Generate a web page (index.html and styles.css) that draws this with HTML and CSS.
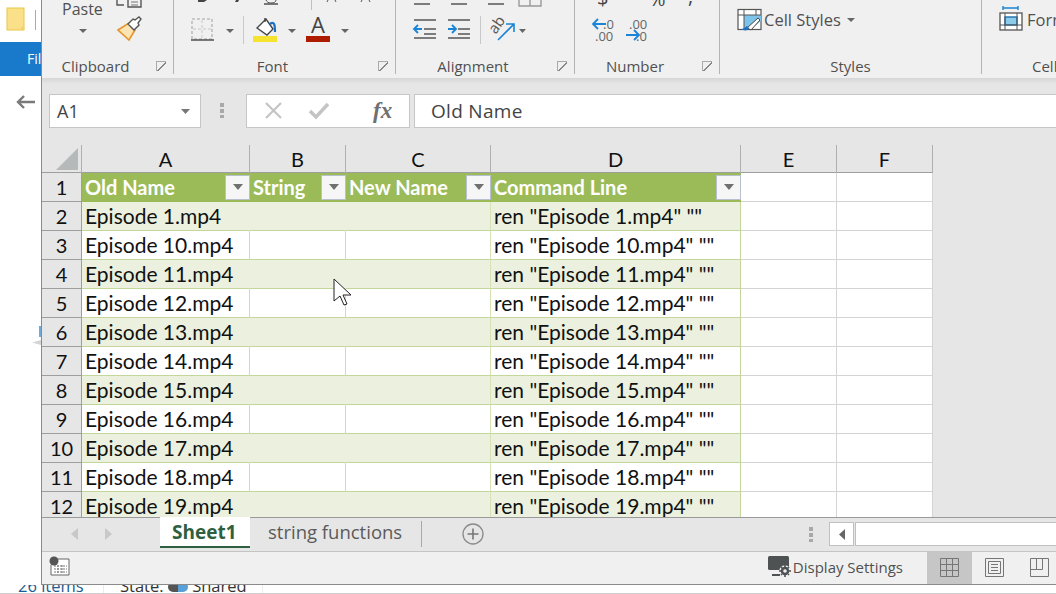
FILE: index.html
```html
<!DOCTYPE html>
<html lang="en">
<head>
    <meta charset="UTF-8">
    <title>Sheet1 - Excel</title>
    <link rel="stylesheet" href="styles.css">
</head>
<body>
    <div class="desktop">
        <div class="rail">
            <div class="rail-top">
                <svg class="folder" width="20" height="24" viewBox="0 0 20 24"><rect x="1" y="1" width="17" height="22" fill="#fbe08a" stroke="#e8c644"/><path d="M15 20h3v3h-3z" fill="#f6d25c"/></svg>
                <span class="rail-line"></span>
            </div>
            <div class="rail-file">File</div>
            <svg class="rail-back" width="20" height="16" viewBox="0 0 20 16"><path d="M9 2 3 8l6 6M3 8h17" fill="none" stroke="#7a7a7a" stroke-width="2.4"/></svg>
            <span class="rail-sliver"></span>
            <span class="rail-wedge"></span>
        </div>

        <div class="window">
            <div class="ribbon">
                <div class="group group-clipboard">
                    <svg class="group-icons" width="131" height="56" viewBox="42 0 131 56">
                        <text x="62" y="15" class="ico-label">Paste</text>
                        <path d="M79 29h8l-4 4z" fill="#666"/>
                        <path d="M117 0v5h7M128 0v7h13V0" fill="none" stroke="#555" stroke-width="1.4"/>
                        <path d="M131 2h7M131 5h7" stroke="#777"/>
                        <path d="M118 30l11-7 6 7-6 10z" fill="#fbe3b4" stroke="#e3962c" stroke-width="1.6"/>
                        <path d="M128 24l5-5 2 1 4-3 2 2-3 4 1 2-5 5z" fill="#fff" stroke="#555" stroke-width="1.4"/>
                    </svg>
                    <div class="group-foot"><span class="group-label">Clipboard</span><span class="launcher"></span></div>
                </div>

                <div class="group group-font">
                    <svg class="group-icons" width="221" height="56" viewBox="174 0 221 56">
                        <path d="M198 0v2h6l3-2zM236 0l-1 2h3l1-2z" fill="#444"/>
                        <path d="M264 4h14" stroke="#444" stroke-width="1.4"/>
                        <path d="M266 0c1 2 2 3 5 3s5-1 5-3" fill="none" stroke="#555"/>
                        <path d="M311.500 0v10" stroke="#c0c0c0"/>
                        <path d="M327 2l1-2M335 0l1 2M361 2l1-2M369 0l1 2" stroke="#555"/>
                        <rect x="192" y="19" width="20" height="20" fill="none" stroke="#bdbdbd" stroke-dasharray="3 2" stroke-width="1.6"/>
                        <path d="M202 20v18M193 29h18" stroke="#c8c8c8" stroke-dasharray="3 2"/>
                        <path d="M191 40h23" stroke="#444" stroke-width="1.4"/>
                        <path d="M226 29h8l-4 4z" fill="#666"/>
                        <path d="M243.500 16v28" stroke="#c8c8c8"/>
                        <path d="M257 28l9-9 7 10-6 6z" fill="#fff" stroke="#444" stroke-width="1.4"/>
                        <path d="M265 22v-4" stroke="#444" stroke-width="1.4"/>
                        <path d="M270 24c4-3 5 0 5 8" fill="none" stroke="#1a73c8" stroke-width="2.2"/>
                        <rect x="253" y="36" width="24" height="6" fill="#f5e330"/>
                        <path d="M288 29h8l-4 4z" fill="#666"/>
                        <text x="311" y="33" class="ico-color">A</text>
                        <rect x="306" y="36" width="24" height="6" fill="#ae1c00"/>
                        <path d="M341 29h8l-4 4z" fill="#666"/>
                    </svg>
                    <div class="group-foot"><span class="group-label">Font</span><span class="launcher"></span></div>
                </div>

                <div class="group group-align">
                    <svg class="group-icons" width="178" height="56" viewBox="396 0 178 56">
                        <path d="M414 4h16M451 4h16M488 4h16" stroke="#555" stroke-width="1.4"/>
                        <path d="M519 0v6h22V0M530 0v6" fill="none" stroke="#999" stroke-width="1.4"/>
                        <path d="M414 20h22M424 29h12M424 34h12M414 38h22M448 20h22M458 29h12M458 34h12M448 38h22" stroke="#555" stroke-width="1.4"/>
                        <path d="M415 29h7M418 25l-4 4 4 4" fill="none" stroke="#1a84d6" stroke-width="1.8"/>
                        <path d="M448 29h8M452 25l4 4-4 4" fill="none" stroke="#1a84d6" stroke-width="1.8"/>
                        <path d="M480.500 16v28" stroke="#c8c8c8"/>
                        <text x="489" y="32" class="ico-ab" transform="rotate(-55 495 27)">ab</text>
                        <path d="M498 40l16-16M506 24h8v8" fill="none" stroke="#1a84d6" stroke-width="1.6"/>
                        <path d="M519 29h7l-3.500 4z" fill="#666"/>
                    </svg>
                    <div class="group-foot"><span class="group-label">Alignment</span><span class="launcher"></span></div>
                </div>

                <div class="group group-number">
                    <svg class="group-icons" width="144" height="56" viewBox="575 0 144 56">
                        <text x="597" y="5" class="ico-top">$</text>
                        <text x="649" y="6" class="ico-top">%</text>
                        <text x="688" y="3" class="ico-top">,</text>
                        <text x="603" y="29" class="ico-num">.0</text>
                        <text x="595" y="41" class="ico-num">.00</text>
                        <path d="M593 24h13M598 19l-5 5 5 5" fill="none" stroke="#1a84d6" stroke-width="1.8"/>
                        <text x="629" y="29" class="ico-num">.00</text>
                        <text x="636" y="41" class="ico-num">.0</text>
                        <path d="M626 35h13M634 30l5 5-5 5" fill="none" stroke="#1a84d6" stroke-width="1.8"/>
                    </svg>
                    <div class="group-foot"><span class="group-label">Number</span><span class="launcher"></span></div>
                </div>

                <div class="group group-styles">
                    <svg class="group-icons" width="261" height="56" viewBox="720 0 261 56">
                        <rect x="738" y="9.500" width="23" height="20" fill="#fff" stroke="#555" stroke-width="1.2"/>
                        <path d="M744 15h17v6l-10 8h-7z" fill="#7ec4ea"/>
                        <path d="M738 15h23M744 9v20M756 9v6" stroke="#555"/>
                        <path d="M747 28l11-10 2 2-9 10z" fill="#fff" stroke="#444"/>
                        <path d="M741 29c3 0 4-2 6-3l2 2c-1 3-5 3-8 1z" fill="#1a73c8"/>
                        <text x="764" y="26" class="ico-label ico-label-wide">Cell Styles</text>
                        <path d="M847 18h8l-4 4z" fill="#666"/>
                    </svg>
                    <div class="group-foot group-foot-plain"><span class="group-label">Styles</span></div>
                </div>

                <div class="group group-cells">
                    <svg class="group-icons" width="74" height="56" viewBox="982 0 74 56">
                        <path d="M1003 8h15M1003 6v4M1018 6v4" fill="none" stroke="#1a84d6" stroke-width="1.4"/>
                        <rect x="1000" y="13" width="22" height="17" fill="#fff" stroke="#555" stroke-width="1.3"/>
                        <rect x="1005" y="17" width="12" height="8" fill="#8ccbea" stroke="#1a6fb0" stroke-width="1.4"/>
                        <path d="M1005 13v17M1017 13v17M1000 25h22" stroke="#555"/>
                        <text x="1027" y="26" class="ico-label ico-label-wide">Format</text>
                    </svg>
                    <div class="group-foot group-foot-cells"><span class="group-label">Cells</span></div>
                </div>
            </div>

            <div class="formula-bar">
                <div class="name-box">
                    <span>A1</span>
                    <svg width="9" height="5" viewBox="0 0 9 5"><path d="M0 0h9L4.500 5z" fill="#777"/></svg>
                </div>
                <span class="grip"></span>
                <div class="formula-buttons">
                    <svg width="20" height="18" viewBox="0 0 20 18"><path d="M2 1l15 15M17 1 2 16" stroke="#c4c4c4" stroke-width="2.2"/></svg>
                    <svg width="22" height="18" viewBox="0 0 22 18"><path d="M2 9l6 6L20 2" fill="none" stroke="#c4c4c4" stroke-width="3.400"/></svg>
                    <span class="fx">fx</span>
                </div>
                <div class="formula-input">Old Name</div>
            </div>

            <div class="sheet">
                <div class="row row-cols">
                    <div class="corner"><span class="corner-mark"></span></div>
                    <div class="col-head">A</div>
                    <div class="col-head">B</div>
                    <div class="col-head">C</div>
                    <div class="col-head">D</div>
                    <div class="col-head">E</div>
                    <div class="col-head">F</div>
                </div>
                <div class="row row-title">
                    <div class="row-head">1</div>
                    <div class="cell"><span>Old Name</span><i class="filter"></i></div>
                    <div class="cell"><span>String</span><i class="filter"></i></div>
                    <div class="cell"><span>New Name</span><i class="filter"></i></div>
                    <div class="cell"><span>Command Line</span><i class="filter"></i></div>
                    <div class="cell plain"></div>
                    <div class="cell plain"></div>
                </div>
                <div class="row band">
                    <div class="row-head">2</div>
                    <div class="cell">Episode 1.mp4</div><div class="cell"></div><div class="cell"></div>
                    <div class="cell">ren "Episode 1.mp4" ""</div><div class="cell plain"></div><div class="cell plain"></div>
                </div>
                <div class="row">
                    <div class="row-head">3</div>
                    <div class="cell">Episode 10.mp4</div><div class="cell"></div><div class="cell"></div>
                    <div class="cell">ren "Episode 10.mp4" ""</div><div class="cell plain"></div><div class="cell plain"></div>
                </div>
                <div class="row band">
                    <div class="row-head">4</div>
                    <div class="cell">Episode 11.mp4</div><div class="cell"></div><div class="cell"></div>
                    <div class="cell">ren "Episode 11.mp4" ""</div><div class="cell plain"></div><div class="cell plain"></div>
                </div>
                <div class="row">
                    <div class="row-head">5</div>
                    <div class="cell">Episode 12.mp4</div><div class="cell"></div><div class="cell"></div>
                    <div class="cell">ren "Episode 12.mp4" ""</div><div class="cell plain"></div><div class="cell plain"></div>
                </div>
                <div class="row band">
                    <div class="row-head">6</div>
                    <div class="cell">Episode 13.mp4</div><div class="cell"></div><div class="cell"></div>
                    <div class="cell">ren "Episode 13.mp4" ""</div><div class="cell plain"></div><div class="cell plain"></div>
                </div>
                <div class="row">
                    <div class="row-head">7</div>
                    <div class="cell">Episode 14.mp4</div><div class="cell"></div><div class="cell"></div>
                    <div class="cell">ren "Episode 14.mp4" ""</div><div class="cell plain"></div><div class="cell plain"></div>
                </div>
                <div class="row band">
                    <div class="row-head">8</div>
                    <div class="cell">Episode 15.mp4</div><div class="cell"></div><div class="cell"></div>
                    <div class="cell">ren "Episode 15.mp4" ""</div><div class="cell plain"></div><div class="cell plain"></div>
                </div>
                <div class="row">
                    <div class="row-head">9</div>
                    <div class="cell">Episode 16.mp4</div><div class="cell"></div><div class="cell"></div>
                    <div class="cell">ren "Episode 16.mp4" ""</div><div class="cell plain"></div><div class="cell plain"></div>
                </div>
                <div class="row band">
                    <div class="row-head">10</div>
                    <div class="cell">Episode 17.mp4</div><div class="cell"></div><div class="cell"></div>
                    <div class="cell">ren "Episode 17.mp4" ""</div><div class="cell plain"></div><div class="cell plain"></div>
                </div>
                <div class="row">
                    <div class="row-head">11</div>
                    <div class="cell">Episode 18.mp4</div><div class="cell"></div><div class="cell"></div>
                    <div class="cell">ren "Episode 18.mp4" ""</div><div class="cell plain"></div><div class="cell plain"></div>
                </div>
                <div class="row band">
                    <div class="row-head">12</div>
                    <div class="cell">Episode 19.mp4</div><div class="cell"></div><div class="cell"></div>
                    <div class="cell">ren "Episode 19.mp4" ""</div><div class="cell plain"></div><div class="cell plain"></div>
                </div>
            </div>

            <div class="tabs">
                <div class="tab-nav">
                    <svg width="7" height="12" viewBox="0 0 7 12"><path d="M7 0v12L0 6z" fill="#c8c8c8"/></svg>
                    <svg width="7" height="12" viewBox="0 0 7 12"><path d="M0 0v12l7-6z" fill="#c8c8c8"/></svg>
                </div>
                <div class="tab tab-active">Sheet1</div>
                <div class="tab">string functions</div>
                <span class="tab-sep"></span>
                <svg class="tab-add" width="22" height="22" viewBox="0 0 22 22"><circle cx="11" cy="11" r="10" fill="none" stroke="#8a8a8a" stroke-width="1.300"/><path d="M11 5.500v11M5.500 11h11" stroke="#777" stroke-width="1.600"/></svg>
                <span class="grip grip-tabs"></span>
                <div class="hscroll">
                    <div class="hscroll-btn"><svg width="6" height="11" viewBox="0 0 6 11"><path d="M6 0v11L0 5.500z" fill="#666"/></svg></div>
                    <div class="hscroll-track"></div>
                </div>
            </div>

            <div class="status">
                <svg class="macro" width="21" height="20" viewBox="0 0 21 20"><path d="M8 3h12v16H2V9" fill="#fff" stroke="#666"/><path d="M5 10h13M5 13h13M5 16h13M9 9v9M13 9v9" stroke="#777" stroke-dasharray="2 1"/><circle cx="5" cy="5" r="4.500" fill="#555"/></svg>
                <div class="display-settings">
                    <svg width="24" height="22" viewBox="0 0 24 22"><rect x="0" y="0" width="21" height="14" rx="1.500" fill="#4e5252"/><path d="M4 19h8" stroke="#4e5252" stroke-width="2"/><circle cx="17" cy="15" r="5" fill="#4e5252" stroke="#f0f0f0" stroke-width="1.500"/><circle cx="17" cy="15" r="1.800" fill="#f0f0f0"/><path d="M17 9v12M11 15h12M13 11l8 8M21 11l-8 8" stroke="#4e5252" stroke-width="1.600" stroke-dasharray="2 8"/></svg>
                    <span>Display Settings</span>
                </div>
                <div class="view view-active"><svg width="19" height="19" viewBox="0 0 19 19"><path d="M.5.500h18v18H.5zM6.500.500v18M12.500.500v18M.5 6.500h18M.5 12.500h18" fill="none" stroke="#767676"/></svg></div>
                <div class="view"><svg width="19" height="19" viewBox="0 0 19 19"><path d="M.5.500h18v18H.5zM3.500 3.500h12v12h-12z" fill="none" stroke="#767676"/><path d="M6 6.500h7M6 9.500h7M6 12.500h7" stroke="#767676"/></svg></div>
                <div class="view"><svg width="19" height="19" viewBox="0 0 19 19"><path d="M.5.500h18v18H.5zM.5 11.500h12M6.500.500v11M12.500.500v11" fill="none" stroke="#767676"/></svg></div>
            </div>
        </div>
    </div>

    <div class="explorer-strip">
        <span class="strip-count">26 items</span>
        <span class="strip-sep"></span>
        <span class="strip-state">State: <b class="strip-people"></b> Shared</span>
        <span class="strip-sep strip-sep-last"></span>
    </div>

    <svg class="cursor" width="19" height="28" viewBox="0 0 19 28"><path d="M1 1v22l6-5 4 9 3-1-4-9h8z" fill="#fff" stroke="#222" stroke-width="1"/></svg>
</body>
</html>
```
FILE: styles.css
```css
* {
    box-sizing: border-box;
}

body {
    margin: 0;
    width: 1056px;
    height: 594px;
    overflow: hidden;
    position: relative;
    background: white;
    font-family: "Open Sans", "Noto Sans", sans-serif;
    color: #444;
}

.desktop {
    display: flex;
    height: 585px;
}

/* explorer window peeking out behind excel */
.rail {
    width: 41px;
    flex: none;
    display: flex;
    flex-direction: column;
    background: white;
    overflow: hidden;
}

.rail-top {
    height: 42px;
    display: flex;
    align-items: flex-start;
    padding: 7px 0 0 6px;
    gap: 9px;
}

.rail-line {
    width: 1px;
    height: 20px;
    margin-top: 3px;
    background: #aaa;
}

.rail-file {
    height: 34px;
    padding-left: 27px;
    background: #1979ca;
    color: white;
    font-size: 14px;
    line-height: 34px;
    white-space: nowrap;
}

.rail-back {
    margin: 18px 0 0 15px;
}

.rail-sliver {
    width: 2px;
    height: 11px;
    margin: 216px 0 0 39px;
    background: #6fa9d8;
}

.rail-wedge {
    width: 9px;
    height: 5px;
    margin: 3px 0 0 32px;
    background: #d4d4d4;
    clip-path: polygon(0 50%, 100% 0, 100% 100%);
}

.window {
    flex: 1;
    min-width: 0;
    display: flex;
    flex-direction: column;
    border-left: 1px solid #8a8a8a;
    border-bottom: 1px solid #8a8a8a;
    background: #e6e6e6;
}

/* ribbon */
.ribbon {
    height: 78px;
    flex: none;
    display: flex;
    background: #f0f0f0;
    overflow: hidden;
}

.group {
    flex: none;
    height: 74px;
    display: flex;
    flex-direction: column;
    border-right: 1px solid #b4b4b4;
}

.group-clipboard { width: 132px; }
.group-font { width: 222px; }
.group-align { width: 179px; }
.group-number { width: 145px; }
.group-styles { width: 262px; }
.group-cells { width: 74px; border-right: none; }

.group-icons {
    display: block;
    flex: none;
}

.group-foot {
    display: flex;
    align-items: center;
    height: 20px;
    padding-right: 7px;
}

.group-foot-plain {
    padding-right: 0;
}

.group-foot-cells {
    padding-left: 50px;
    padding-right: 0;
}

.group-label {
    flex: 1;
    text-align: center;
    font-size: 15px;
    line-height: 21px;
    color: #505050;
    white-space: nowrap;
}

.launcher {
    width: 10px;
    height: 10px;
    margin-left: 7px;
    border-left: 1px solid #aaa;
    border-top: 1px solid #aaa;
    background: linear-gradient(135deg, transparent 0 46%, #888 46% 56%, transparent 56%);
}

.ico-label {
    font-size: 16px;
    fill: #505050;
}

.ico-label-wide {
    font-size: 16.500px;
}

.ico-color {
    font-size: 22px;
    fill: #444;
}

.ico-ab {
    font-size: 15px;
    fill: #555;
}

.ico-top {
    font-size: 20px;
    fill: #444;
}

.ico-num {
    font-size: 13px;
    fill: #666;
}

/* formula bar */
.formula-bar {
    height: 67px;
    flex: none;
    display: flex;
    padding: 16px 0 17px 7px;
    background: linear-gradient(#d6d6d6, #e6e6e6 6px);
}

.name-box {
    width: 152px;
    display: flex;
    align-items: center;
    justify-content: space-between;
    padding: 0 10px 0 7px;
    background: white;
    border: 1px solid #c6c6c6;
    font-size: 18px;
}

.grip {
    width: 4px;
    height: 15px;
    margin: 9px 22px 0 19px;
    background: repeating-linear-gradient(#a8a8a8 0 4px, transparent 4px 6px);
}

.formula-buttons {
    width: 164px;
    display: flex;
    align-items: center;
    padding-left: 17px;
    background: white;
    border: 1px solid #c6c6c6;
    gap: 24px;
}

.fx {
    font-family: "Liberation Serif", serif;
    font-style: italic;
    font-weight: bold;
    font-size: 23px;
    color: #707070;
    margin-left: 19px;
}

.formula-input {
    flex: 1;
    margin-left: 4px;
    padding-left: 16px;
    background: white;
    border: 1px solid #c6c6c6;
    border-right: none;
    font-size: 19px;
    letter-spacing: .3px;
    line-height: 32px;
}

/* sheet */
.sheet {
    flex: 1;
    min-height: 0;
    overflow: hidden;
    font-family: Lato, "Liberation Sans", sans-serif;
    font-size: 20px;
    color: #111;
}

.row {
    display: grid;
    grid-template-columns: 40px 168px 96px 145px 250px 96px 96px;
    width: 891px;
    height: 29px;
}

.row-cols {
    height: 28px;
    border-bottom: 1px solid #9e9e9e;
}

.corner {
    display: flex;
    justify-content: flex-end;
    padding: 3px 3px 0 0;
    border-right: 1px solid #b0b0b0;
}

.corner-mark {
    width: 22px;
    height: 22px;
    background: #b6b9b9;
    clip-path: polygon(100% 0, 100% 100%, 0 100%);
}

.col-head {
    text-align: center;
    line-height: 29px;
    border-right: 1px solid #b0b0b0;
}

.row-head {
    text-align: center;
    line-height: 28px;
    border-right: 1px solid #9e9e9e;
    border-bottom: 1px solid #9e9e9e;
}

.cell {
    display: flex;
    align-items: center;
    padding: 1px 0 2px 3px;
    background: white;
    border-right: 1px solid #d4d4d4;
    border-bottom: 1px solid #c4d79b;
    font-size: 21px;
    white-space: nowrap;
}

.cell:nth-child(4) {
    border-right-color: #d5e2b5;
}

.cell:nth-child(5) {
    border-right-color: #c4d79b;
}

.cell.plain {
    border-bottom-color: #d4d4d4;
}

.band .cell {
    background: #ebf1de;
}

.band .cell:nth-child(2),
.band .cell:nth-child(3) {
    border-right-color: #ebf1de;
}

.band .cell.plain {
    background: white;
    border-right-color: #d4d4d4;
}

.row-title .cell {
    justify-content: space-between;
    padding: 0 0 0 3px;
    background: #9bbb59;
    border-right-color: #9bbb59;
    border-bottom-color: #9bbb59;
    color: white;
    font-size: 20px;
    font-weight: bold;
}

.row-title .cell.plain {
    background: white;
    border-right-color: #d4d4d4;
    border-bottom-color: #d4d4d4;
}

.filter {
    display: flex;
    align-items: center;
    justify-content: center;
    width: 25px;
    height: 25px;
    flex: none;
    margin-right: -1px;
    background: #f6f6f6;
    border: 1px solid #b8bfce;
}

.filter::after {
    content: "";
    border-left: 5px solid transparent;
    border-right: 5px solid transparent;
    border-top: 6px solid #707070;
}

/* sheet tabs */
.tabs {
    height: 35px;
    flex: none;
    display: flex;
    align-items: flex-start;
    border-top: 1px solid #9a9a9a;
    border-bottom: 1px solid #c4c4c4;
    padding-left: 29px;
    font-size: 18.500px;
}

.tab-nav {
    width: 89px;
    display: flex;
    gap: 27px;
    padding-top: 10px;
}

.tab {
    height: 32px;
    padding: 0 19px 0 18px;
    line-height: 28px;
    color: #5a5a5a;
    white-space: nowrap;
}

.tab-active {
    width: 90px;
    height: 31px;
    margin-top: -1px;
    padding: 0 0 0 12px;
    background: white;
    border-bottom: 2px solid #2f5f41;
    color: #2f5f41;
    font-size: 19px;
    font-weight: bold;
    line-height: 30px;
}

.tab-sep {
    width: 1px;
    height: 26px;
    margin: 3px 0 0 0;
    background: #a8a8a8;
}

.tab-add {
    margin: 5px 0 0 40px;
}

.grip-tabs {
    margin: 9px 16px 0 325px;
}

.hscroll {
    flex: 1;
    display: flex;
    margin-top: 4px;
    height: 24px;
    min-width: 0;
}

.hscroll-btn {
    width: 25px;
    flex: none;
    display: flex;
    align-items: center;
    justify-content: center;
    background: white;
    border: 1px solid #c0c0c0;
}

.hscroll-track {
    flex: 1;
    margin-left: 1px;
    background: white;
    border: 1px solid #c0c0c0;
    border-right: none;
}

/* status bar */
.status {
    height: 32px;
    flex: none;
    display: flex;
    align-items: center;
    padding-left: 7px;
    background: #f0f0f0;
}

.macro {
    margin-bottom: 4px;
}

.display-settings {
    display: flex;
    align-items: center;
    gap: 1px;
    margin-left: auto;
    margin-right: 24px;
    padding-bottom: 2px;
    font-size: 15px;
    color: #505050;
}

.view {
    width: 45px;
    height: 32px;
    display: flex;
    align-items: center;
    justify-content: center;
    padding-bottom: 2px;
}

.view:last-child {
    width: 39px;
    padding-left: 5px;
}

.view-active {
    background: #c6c6c6;
}

.explorer-strip {
    height: 9px;
    display: flex;
    align-items: flex-end;
    padding-left: 18px;
    overflow: hidden;
    border-bottom: 1px solid #d0d0d0;
    font-size: 16.500px;
    line-height: 18px;
    color: #333;
}

.strip-count {
    width: 85px;
    height: 18px;
    flex: none;
    margin-bottom: -2px;
    color: #1b5a92;
    white-space: nowrap;
}

.strip-sep {
    width: 1px;
    height: 9px;
    flex: none;
    margin-right: 16px;
    background: #ececec;
}

.strip-sep-last {
    margin: 0 0 0 14px;
}

.strip-state {
    width: 128px;
    height: 18px;
    flex: none;
    margin-bottom: -2px;
    white-space: nowrap;
}

.strip-people {
    display: inline-block;
    width: 20px;
    height: 10px;
    background: linear-gradient(90deg, #555 50%, #5aa0d8 50%);
    border-radius: 5px;
}

.cursor {
    position: absolute;
    left: 333px;
    top: 278px;
}
```
